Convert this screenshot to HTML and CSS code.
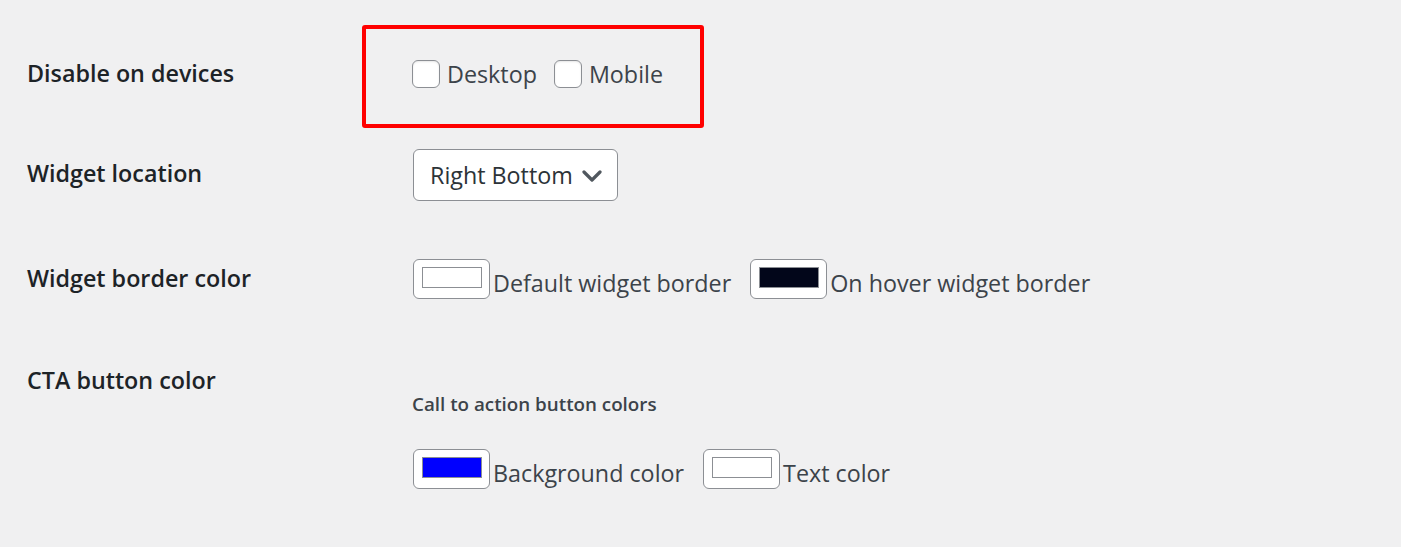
FILE: index.html
```html
<!DOCTYPE html>
<html lang="en">
<head>
<meta charset="utf-8">
<title>Settings</title>
<link rel="stylesheet" href="styles.css">
</head>
<body>
<div class="form">
  <div class="row row-devices">
    <div class="label">Disable on devices</div>
    <div class="field field-devices">
      <div class="checks">
        <label class="check"><span class="box"></span><span>Desktop</span></label>
        <label class="check"><span class="box"></span><span>Mobile</span></label>
        <span class="highlight"></span>
      </div>
    </div>
  </div>
  <div class="row row-location">
    <div class="label">Widget location</div>
    <div class="field field-location">
      <div class="select">
        <span>Right Bottom</span>
        <svg class="chev" width="20" height="12" viewBox="0 0 20 12"><path d="M2 2 L10 10 L18 2" fill="none" stroke="#50575e" stroke-width="3.2" stroke-linecap="round" stroke-linejoin="round"/></svg>
      </div>
    </div>
  </div>
  <div class="row row-border">
    <div class="label">Widget border color</div>
    <div class="field field-border">
      <div class="colors">
        <span class="color"><span class="swatch sw-white"></span></span><span class="ctext">Default widget border</span>
        <span class="color"><span class="swatch sw-dark"></span></span><span class="ctext">On hover widget border</span>
      </div>
    </div>
  </div>
  <div class="row row-cta">
    <div class="label">CTA button color</div>
    <div class="field field-cta">
      <div class="desc">Call to action button colors</div>
      <div class="colors">
        <span class="color"><span class="swatch sw-blue"></span></span><span class="ctext">Background color</span>
        <span class="color"><span class="swatch sw-white"></span></span><span class="ctext">Text color</span>
      </div>
    </div>
  </div>
</div>
</body>
</html>
```

FILE: styles.css
```css
html, body {
  margin: 0;
  padding: 0;
  background: #f0f0f1;
}
body {
  font-family: "Open Sans", "Noto Sans", sans-serif;
  color: #1d2327;
  height: 547px;
  overflow: hidden;
}
.form {
  padding-left: 27px;
}
.row {
  display: grid;
  grid-template-columns: 385px 1fr;
  align-items: start;
  box-sizing: border-box;
}
.label {
  font-size: 23.3px;
  font-weight: 600;
  line-height: 32px;
  color: #1d2327;
}
.row-devices { padding-top: 57px; height: 157px; }
.row-location { height: 105px; }
.row-border { height: 102px; }
.field-devices { padding-top: 3px; }
.checks {
  position: relative;
  display: flex;
  align-items: center;
  gap: 17px;
  height: 28px;
}
.check {
  display: flex;
  align-items: center;
  gap: 7px;
  font-size: 23.3px;
  color: #3c434a;
}
.box {
  width: 28px;
  height: 28px;
  box-sizing: border-box;
  border: 1.5px solid #8c8f94;
  border-radius: 6px;
  background: #fff;
  box-shadow: inset 0 1px 2px rgba(0,0,0,.1);
}
.highlight {
  position: absolute;
  left: -50px;
  top: -35px;
  width: 342px;
  height: 103px;
  box-sizing: border-box;
  border: 4px solid #ff0000;
  border-radius: 3px;
}
.field-location { margin-top: -8px; padding-left: 1px; }
.select {
  display: flex;
  align-items: center;
  justify-content: space-between;
  width: 205px;
  height: 52px;
  box-sizing: border-box;
  border: 1.5px solid #8c8f94;
  border-radius: 6px;
  background: #fff;
  padding: 0 15px 0 16px;
  font-size: 23.3px;
  color: #2c3338;
}
.chev { margin-top: 1px; }
.field-border { margin-top: -4px; padding-left: 1px; }
.colors {
  display: flex;
  align-items: center;
  font-size: 23.3px;
  color: #3c434a;
}
.color {
  width: 77px;
  height: 40px;
  box-sizing: border-box;
  border: 1px solid #8c8f94;
  border-radius: 6px;
  background: #fff;
  padding: 7px 0 0 8px;
}
.swatch {
  display: block;
  width: 60px;
  height: 21px;
  box-sizing: border-box;
  border: 1px solid #8c8f94;
}
.sw-white { background: #fff; }
.sw-dark { background: #02061a; }
.sw-blue { background: #0000ff; }
.ctext {
  margin-left: 3px;
  margin-right: 19px;
  padding-top: 9px;
}
.field-cta { padding-top: 28px; }
.field-cta .colors { padding-left: 1px; }
.desc {
  font-size: 18.8px;
  font-weight: 600;
  color: #3c434a;
  line-height: 24px;
  margin-bottom: 32px;
}
```
